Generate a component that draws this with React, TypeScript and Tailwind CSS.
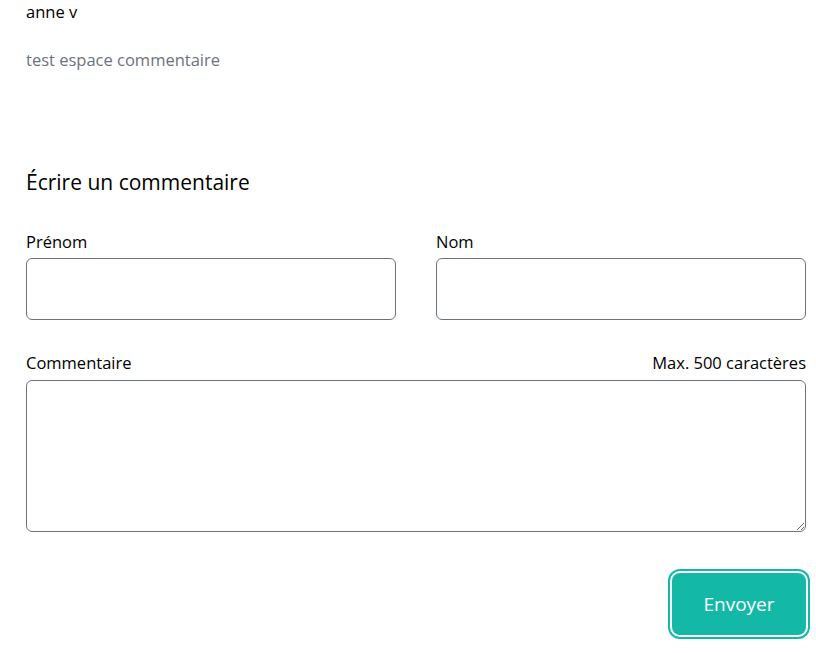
export default function App() {
  return (
    <div className="min-h-screen bg-white pl-[26px] pr-[10px] text-black" style={{ fontFamily: '"Open Sans", "Noto Sans", sans-serif' }}>
      {/* Commentaire existant */}
      <div className="text-[16.5px] leading-6">anne v</div>
      <p className="mt-6 text-[16.5px] leading-6 text-[#6b7280]">test espace commentaire</p>

      {/* Formulaire */}
      <h2 className="mt-[96px] text-[21px] leading-7">Écrire un commentaire</h2>
      <div className="mt-[34px] grid grid-cols-2 gap-10">
        <div>
          <label className="block text-[16.5px] leading-6">Prénom</label>
          <input className="mt-1 block h-[62px] w-full rounded-md border border-[#6b7280] px-3" />
        </div>
        <div>
          <label className="block text-[16.5px] leading-6">Nom</label>
          <input className="mt-1 block h-[62px] w-full rounded-md border border-[#6b7280] px-3" />
        </div>
      </div>
      <div className="mt-[31px]">
        <div className="flex items-end justify-between text-[16.5px] leading-6">
          <label>Commentaire</label>
          <span>Max. 500 caractères</span>
        </div>
        <textarea className="mt-[5px] block h-[152px] w-full rounded-md border border-[#6b7280] p-3" />
      </div>
      <div className="mt-[41px] flex justify-end">
        <button className="h-[62px] w-[134px] rounded-lg bg-[#14b8a6] text-[19px] text-white shadow-[0_0_0_2px_#fff,0_0_0_4px_#14b8a6]">
          Envoyer
        </button>
      </div>
    </div>
  );
}
